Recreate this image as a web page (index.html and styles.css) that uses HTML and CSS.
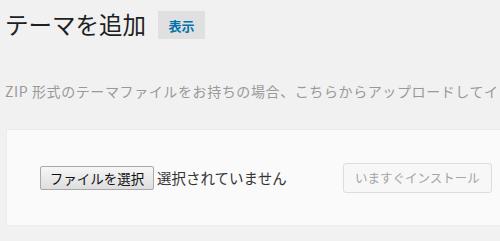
FILE: index.html
```html
<!DOCTYPE html>
<html lang="ja">
<head>
    <meta charset="UTF-8">
    <meta name="viewport" content="width=device-width, initial-scale=1.0">
    <title>テーマを追加</title>
    <link rel="stylesheet" href="styles.css">
</head>
<body>
    <div class="wrap">
        <header class="page-header">
            <h1>テーマを追加</h1>
            <button type="button" class="browse-btn">表示</button>
        </header>

        <p class="install-help">ZIP 形式のテーマファイルをお持ちの場合、こちらからアップロードしてインストールできます。</p>

        <form class="upload-card">
            <div class="file-field">
                <button type="button" class="file-btn">ファイルを選択</button>
                <span class="file-name">選択されていません</span>
            </div>
            <button type="submit" class="install-btn" disabled>いますぐインストール</button>
        </form>
    </div>
</body>
</html>
```

FILE: styles.css
```css
:root {
    --bg-page: #f1f1f1;
    --bg-card: #fafafa;
    --border-card: #ececec;
    --text-primary: #23282d;
    --text-muted: #999999;
    --link-color: #0073aa;
}

* {
    margin: 0;
    padding: 0;
    box-sizing: border-box;
}

body {
    font-family: "Noto Sans CJK JP", "Noto Sans", sans-serif;
    background: var(--bg-page);
    color: var(--text-primary);
    overflow: hidden;
}

.wrap {
    width: 640px;
    padding: 8px 0 0 5px;
}

.page-header {
    display: flex;
    align-items: center;
    gap: 12px;
    height: 34px;
}

h1 {
    font-size: 23.5px;
    font-weight: 400;
    line-height: 1;
    color: #1f1f1f;
}

.browse-btn {
    font-family: inherit;
    font-size: 13px;
    font-weight: 700;
    color: var(--link-color);
    background: #e0e0e0;
    border: none;
    width: 47px;
    height: 28px;
}

.install-help {
    margin-top: 40px;
    font-size: 14px;
    line-height: 19px;
    letter-spacing: 0.6px;
    color: var(--text-muted);
    white-space: nowrap;
}

.upload-card {
    display: flex;
    align-items: center;
    justify-content: space-between;
    margin: 28px 0 0 1px;
    width: 520px;
    height: 97px;
    padding: 0 33px 0 33px;
    background: var(--bg-card);
    border: 1px solid var(--border-card);
}

.file-field {
    display: flex;
    align-items: center;
    gap: 3px;
}

.file-btn {
    font-family: inherit;
    font-size: 13.5px;
    color: #111;
    width: 114px;
    height: 24px;
    background: linear-gradient(#f6f6f6, #dedede);
    border: 1px solid #a9a9a9;
    border-radius: 2px;
}

.file-name {
    font-size: 14.5px;
    color: #333;
}

.install-btn {
    font-family: inherit;
    font-size: 12.5px;
    color: #a0a5aa;
    width: 149px;
    height: 30px;
    background: #f7f7f7;
    border: 1px solid #dddddd;
    border-radius: 3px;
}
```
